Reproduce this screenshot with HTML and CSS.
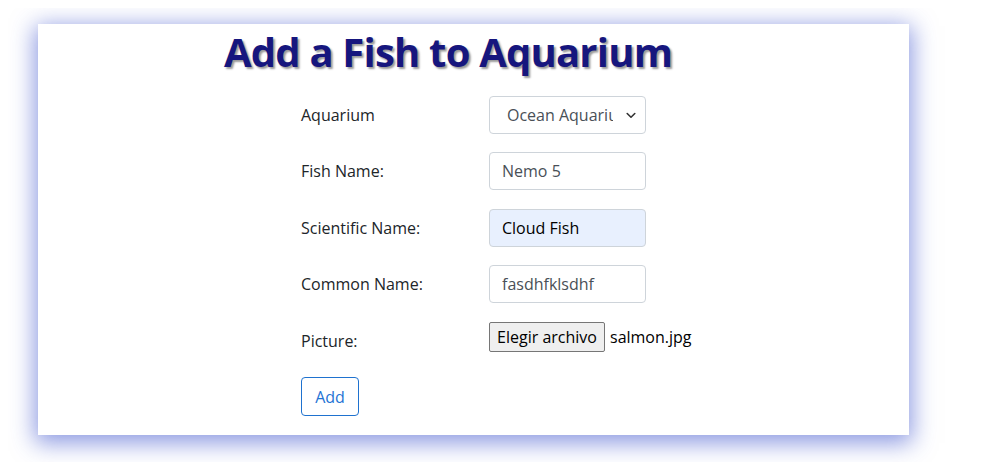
FILE: index.html
```html
<!DOCTYPE html>
<html lang="es">
<head>
<meta charset="utf-8">
<title>Add a Fish to Aquarium</title>
<link rel="stylesheet" href="styles.css">
</head>
<body>
<div class="card">
  <h1 class="title">Add a Fish to Aquarium</h1>
  <form class="form">
    <div class="row">
      <label class="label" for="aq">Aquarium</label>
      <div class="select-wrap">
        <select id="aq" class="control select"><option>Ocean Aquarium</option></select>
        <svg class="chev" width="10" height="7" viewBox="0 0 10 7"><path d="M1.2 1.5 L5 5.2 L8.8 1.5" fill="none" stroke="#333" stroke-width="1.6" stroke-linecap="round" stroke-linejoin="round"/></svg>
      </div>
    </div>
    <div class="row">
      <label class="label" for="fn">Fish Name:</label>
      <input id="fn" class="control" type="text" value="Nemo 5">
    </div>
    <div class="row">
      <label class="label" for="sn">Scientific Name:</label>
      <input id="sn" class="control autofill" type="text" value="Cloud Fish">
    </div>
    <div class="row">
      <label class="label" for="cn">Common Name:</label>
      <input id="cn" class="control" type="text" value="fasdhfklsdhf">
    </div>
    <div class="row">
      <label class="label">Picture:</label>
      <div class="file">
        <button type="button" class="file-btn">Elegir archivo</button>
        <span class="file-name">salmon.jpg</span>
      </div>
    </div>
    <div class="row">
      <button type="button" class="btn">Add</button>
    </div>
  </form>
</div>
</body>
</html>
```
FILE: styles.css
```css
* { box-sizing: border-box; }
html, body { background: #ffffff; }
html { min-height: 470px; }
body {
  margin: 8px;
  min-height: 454px;
  font-family: "Open Sans", "Noto Sans", sans-serif;
  font-size: 16px;
  color: #212529;
}
.card {
  margin: 16px 0 0 30px;
  width: 871px;
  height: 411px;
  background: #ffffff;
  box-shadow: 0 5px 22px 3px rgba(45, 70, 200, 0.55);
  padding-top: 4px;
}
.title {
  margin: 0 0 0 186px;
  font-family: "Open Sans", sans-serif;
  font-weight: 700;
  font-size: 40px;
  letter-spacing: -0.8px;
  line-height: 48px;
  height: 68px;
  color: #16167e;
  text-shadow: 2px 2px 2px #9a9a9a;
}
.form {
  margin-left: 263px;
  display: flex;
  flex-direction: column;
  gap: 18.4px;
}
.row {
  display: flex;
  align-items: center;
  height: 38px;
}
.label {
  width: 188px;
  color: #212529;
}
.control {
  width: 157px;
  height: 38px;
  padding: 6px 12px;
  border: 1px solid #ced4da;
  border-radius: 4px;
  font-family: inherit;
  font-size: 16px;
  line-height: 24px;
  color: #495057;
  background: #ffffff;
  outline: none;
}
.autofill {
  background: #e8f0fe;
  color: #000000;
}
.select-wrap {
  position: relative;
  width: 157px;
  height: 38px;
}
.select {
  appearance: none;
  -webkit-appearance: none;
  padding: 6px 32px 6px 17px;
}
.chev {
  position: absolute;
  right: 10px;
  top: 16px;
  pointer-events: none;
}
.file {
  align-self: flex-start;
  display: flex;
  align-items: center;
  height: 30px;
}
.file-btn {
  height: 30px;
  width: 116px;
  padding: 0 6px;
  background: #efefef;
  border: 1px solid #767676;
  border-radius: 2px;
  font-family: inherit;
  font-size: 16px;
  color: #000000;
  white-space: nowrap;
}
.file-name {
  margin-left: 5px;
  color: #000000;
}
.btn {
  height: 39px;
  width: 58px;
  padding: 0;
  background: #ffffff;
  border: 1px solid #1f72cf;
  border-radius: 4px;
  font-family: inherit;
  font-size: 16px;
  color: #1f74d4;
}
```
